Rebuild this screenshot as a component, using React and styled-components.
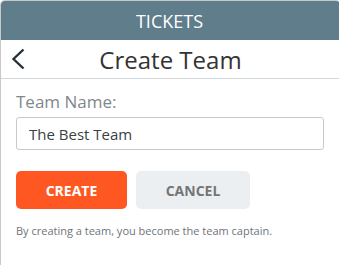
import React from "react";
import styled, { createGlobalStyle } from "styled-components";

const Global = createGlobalStyle`
  html, body { margin: 0; padding: 0; background: #fff; overflow: hidden; }
  body { font-family: "Open Sans", "Noto Sans", sans-serif; }
  * { box-sizing: border-box; }
`;

const Card = styled.div`
  width: 341px;
  height: 265px;
  border: 1px solid #c9c9c9;
  border-bottom: 0;
  border-radius: 5px 5px 0 0;
  overflow: hidden;
  background: #fff;
`;

const TopBar = styled.div`
  height: 39px;
  background: #607d8b;
  color: #fff;
  display: flex;
  align-items: center;
  justify-content: center;
  font-size: 18px;
  padding-right: 2px;
`;

const TitleBar = styled.div`
  height: 39px;
  border-bottom: 1px solid #cfd8dc;
  display: grid;
  grid-template-columns: 40px 1fr 40px;
  align-items: center;
`;

const Back = styled.button`
  border: 0;
  background: none;
  padding: 0 0 0 9px;
  display: flex;
  align-items: center;
  color: #263238;
`;

const Title = styled.h1`
  margin: 0;
  text-align: center;
  font-weight: 400;
  font-size: 24px;
  color: #333;
`;

const Body = styled.div`
  padding: 12px 15px 0 15px;
`;

const Label = styled.label`
  display: block;
  font-size: 17px;
  color: #80878b;
  line-height: 22px;
  margin-bottom: 4px;
`;

const Input = styled.input`
  width: 308px;
  height: 33px;
  border: 1px solid #c8c8c8;
  border-radius: 3px;
  padding: 0 12px;
  font-family: inherit;
  font-size: 15px;
  color: #3a3f44;
  outline: none;
`;

const Buttons = styled.div`
  display: flex;
  gap: 9px;
  margin-top: 21px;
`;

const Button = styled.button`
  width: ${(p) => p.$w}px;
  height: 38px;
  border: 0;
  border-radius: 5px;
  font-family: inherit;
  font-weight: 700;
  font-size: 14px;
  background: ${(p) => (p.$primary ? "#ff5722" : "#eceff1")};
  color: ${(p) => (p.$primary ? "#fff" : "#757575")};
`;

const Note = styled.p`
  margin: 14px 0 0;
  font-size: 11px;
  color: #6e7479;
`;

export default function App() {
  return (
    <>
      <Global />
      <Card>
        <TopBar>TICKETS</TopBar>
        <TitleBar>
          <Back aria-label="Back">
            <svg width="17" height="24" viewBox="0 0 17 24">
              <path d="M13.5 2.5 L3.5 12 L13.5 21.5" fill="none" stroke="#263238" strokeWidth="2.4" />
            </svg>
          </Back>
          <Title>Create Team</Title>
          <span />
        </TitleBar>
        <Body>
          <Label>Team Name:</Label>
          <Input defaultValue="The Best Team" />
          <Buttons>
            <Button $primary $w={111}>CREATE</Button>
            <Button $w={114}>CANCEL</Button>
          </Buttons>
          <Note>By creating a team, you become the team captain.</Note>
        </Body>
      </Card>
    </>
  );
}
